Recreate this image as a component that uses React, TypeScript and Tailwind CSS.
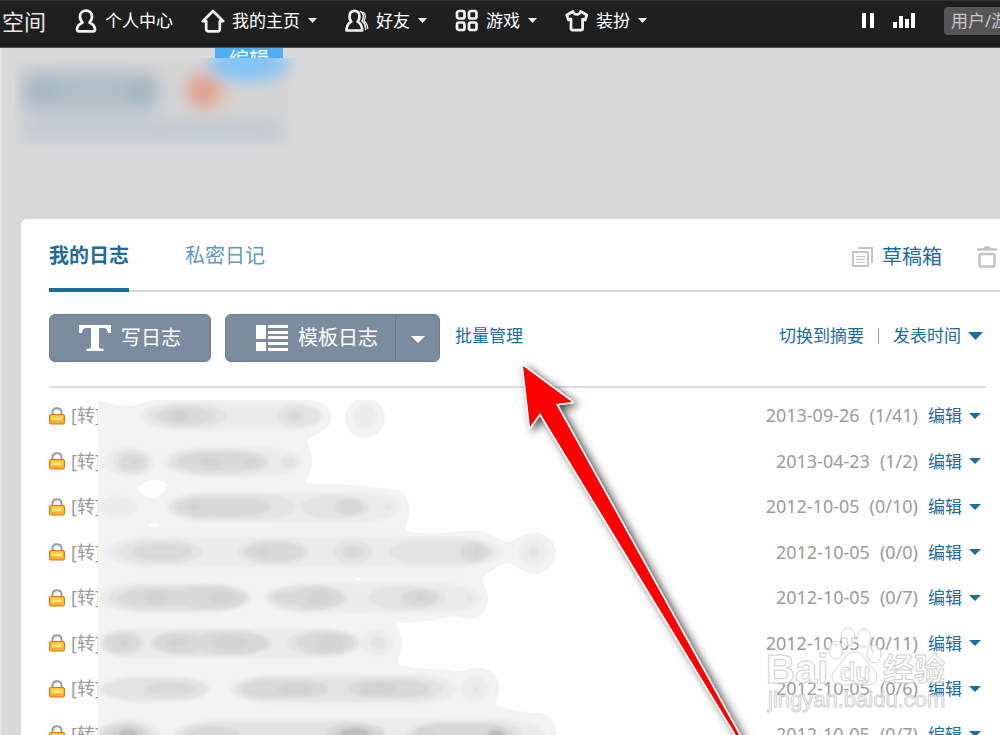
import { ReactNode } from "react";

type Post = { date: string; counts: string };

const posts: Post[] = [
  { date: "2013-09-26", counts: "(1/41)" },
  { date: "2013-04-23", counts: "(1/2)" },
  { date: "2012-10-05", counts: "(0/10)" },
  { date: "2012-10-05", counts: "(0/0)" },
  { date: "2012-10-05", counts: "(0/7)" },
  { date: "2012-10-05", counts: "(0/11)" },
  { date: "2012-10-05", counts: "(0/6)" },
  { date: "2012-10-05", counts: "(0/7)" }
];

// start x, end x, half height, shade index
type Smudge = [number, number, number, number];

const shades = ["#ececec", "#e3e3e3", "#d9d9d9", "#d3d3d3", "#bdbdbd"];

const smudges: { y: number; marks: Smudge[] }[] = [
  {
    y: 416,
    marks: [
      [140, 325, 14, 0], [353, 377, 12, 0], [148, 227, 12, 1], [276, 320, 11, 1],
      [157, 213, 9, 2], [286, 304, 5, 2], [167, 188, 5, 3]
    ]
  },
  {
    y: 462,
    marks: [
      [103, 155, 15, 0], [162, 303, 15, 0], [113, 150, 12, 1], [169, 270, 13, 1], [280, 297, 6, 1],
      [119, 146, 8, 2], [177, 265, 9, 2], [131, 139, 3, 3], [200, 222, 5, 3], [243, 258, 5, 3]
    ]
  },
  {
    y: 507,
    marks: [
      [98, 138, 11, 0], [165, 402, 15, 0], [169, 296, 13, 1], [300, 370, 12, 1],
      [175, 270, 9, 2], [334, 363, 8, 2], [187, 201, 4, 3], [384, 392, 3, 1]
    ]
  },
  {
    y: 552,
    marks: [
      [104, 502, 15, 0], [518, 548, 14, 0], [119, 202, 12, 1], [238, 310, 13, 1], [332, 373, 11, 1],
      [388, 494, 12, 1], [528, 539, 5, 1], [133, 192, 8, 2], [244, 304, 10, 2], [342, 363, 6, 2],
      [460, 488, 10, 2], [255, 272, 5, 3], [472, 482, 5, 3]
    ]
  },
  {
    y: 598,
    marks: [
      [98, 252, 15, 0], [264, 482, 15, 0], [108, 249, 13, 1], [268, 348, 13, 1], [368, 446, 12, 1],
      [118, 190, 9, 2], [172, 245, 11, 2], [274, 300, 6, 2], [290, 343, 11, 2], [402, 438, 9, 2],
      [146, 168, 6, 3], [208, 236, 6, 3], [307, 333, 7, 3], [415, 426, 3, 3], [466, 472, 3, 1]
    ]
  },
  {
    y: 643,
    marks: [
      [98, 362, 15, 0], [360, 394, 13, 0], [101, 145, 13, 1], [150, 272, 13, 1], [286, 360, 13, 1],
      [370, 386, 6, 1], [104, 140, 9, 2], [153, 205, 10, 2], [192, 268, 11, 2], [296, 354, 11, 2],
      [120, 128, 4, 3], [166, 188, 5, 3], [212, 248, 7, 3], [316, 344, 8, 3]
    ]
  },
  {
    y: 689,
    marks: [
      [98, 210, 13, 0], [230, 458, 15, 0], [461, 489, 13, 0], [104, 207, 11, 1], [235, 444, 12, 1],
      [146, 196, 6, 2], [242, 328, 9, 2], [348, 430, 9, 2], [278, 312, 6, 3], [360, 398, 6, 3], [474, 479, 2, 1]
    ]
  },
  {
    y: 735,
    marks: [
      [98, 160, 16, 0], [172, 545, 16, 0], [98, 154, 13, 1], [178, 388, 13, 1], [406, 524, 14, 1],
      [104, 148, 11, 2], [186, 240, 9, 2], [324, 384, 12, 2], [414, 514, 11, 2],
      [110, 144, 9, 3], [332, 378, 9, 3], [414, 436, 7, 3], [486, 508, 8, 3],
      [118, 138, 6, 4], [340, 370, 7, 4], [488, 504, 5, 4]
    ]
  }
];

export default function App() {
  return (
    <div className="flex h-screen flex-col overflow-hidden bg-[#d9d9d9] font-['Noto_Sans','Noto_Sans_CJK_SC',sans-serif] text-[17px]">
      <TopBar />
      <div className="flex flex-1 flex-col border-l-2 border-[#e2e2e2]">
        <Profile />
        <main className="relative ml-[19px] flex-1 rounded-tl-md bg-[#fefefe] pl-7">
          <Tabs />
          <Toolbar />
          <ul className="mt-[5px] mr-[13px] grid h-[364px] grid-rows-8">
            {posts.map((post, index) => (
              <PostRow key={index} post={post} />
            ))}
          </ul>
          <Redaction />
          <Watermark />
          <Pointer />
        </main>
      </div>
    </div>
  );
}

function TopBar() {
  return (
    <header className="flex h-12 shrink-0 items-center overflow-hidden border-t border-b border-t-[#333] border-b-[#555] bg-[#1f1f1f] pb-[7px] pl-0.5 text-white">
      <a href="#" className="shrink-0 text-[22px] leading-6 text-[#e6e6e6]">空间</a>
      <nav className="ml-[28px] flex items-center gap-7">
        <NavItem label="个人中心">
          <path d="M8.5 13.5C6.6 11.8 6 9.8 6 7.6 6 4.200 8.600 1.600 12 1.600s6 2.600 6 6c0 2.200-.6 4.200-2.500 5.900 3.500 1.700 5.500 4 5.500 7 0 1.200-.7 1.900-2 1.900H5c-1.300 0-2-.7-2-1.900 0-3 2-5.300 5.500-7z" />
        </NavItem>
        <NavItem label="我的主页" caret>
          <path d="M12 2 1.800 12.200h3.400V20c0 1.600.8 2.300 2.300 2.300h9c1.500 0 2.300-.7 2.300-2.300v-7.800h3.400z" />
        </NavItem>
        <NavItem label="好友" caret>
          <path d="M6.300 12.600C4.800 11 4.500 9.500 4.500 7.400c0-3.500 2.100-5.600 5-5.600s5 2.100 5 5.600c0 2.100-.4 3.600-1.900 5.200 3 1.500 4.600 4.400 4.600 8.900H1.500c0-4.500 1.800-7.400 4.800-8.900z" />
          <path d="M15.500 2.500c2.800.8 4 5.600 1.500 9.500 2.500 1.500 3.600 4.500 3.600 8.500" strokeWidth="1.500" />
          <path d="M18.500 3.500c2 1.800 2 5.500.5 8.500 2.200 1.500 3.500 4 3.700 7.500" strokeWidth="1.300" />
        </NavItem>
        <NavItem label="游戏" caret>
          <rect x="2" y="2" width="7.500" height="7.500" rx="2" />
          <rect x="14" y="2" width="7.500" height="7.500" rx="2" />
          <rect x="2" y="13.500" width="7.500" height="7.500" rx="2" />
          <rect x="14" y="13.500" width="7.500" height="7.500" rx="2" />
        </NavItem>
        <NavItem label="装扮" caret>
          <path d="M8 2.500 1.800 6l1.700 5 2.500-1v9.500c0 1.200.7 1.700 1.800 1.700h8c1.100 0 1.800-.5 1.800-1.700V10l2.500 1L21.800 6l-6.200-3.500C15 4.800 13.800 5.500 11.800 5.500S8.600 4.800 8 2.500z" />
        </NavItem>
      </nav>
      <div className="-mr-16 ml-auto flex shrink-0 items-center">
        <button type="button" aria-label="暂停" className="mr-[19px]">
          <svg width="12" height="15" fill="#fff">
            <rect width="4" height="15" />
            <rect x="8" width="4" height="15" />
          </svg>
        </button>
        <button type="button" aria-label="音乐" className="mr-[27px]">
          <svg width="24" height="15" fill="#fff">
            <rect x="0" y="9" width="4" height="6" />
            <rect x="6" y="3" width="4" height="12" />
            <rect x="12" y="6" width="4" height="9" />
            <rect x="18" y="0" width="4" height="15" />
          </svg>
        </button>
        <input
          type="search"
          aria-label="搜索"
          placeholder="用户/游戏"
          className="h-7 w-[120px] rounded-sm bg-[#555] pl-[7px] text-[17px] text-white outline-none placeholder:text-[#c8c8c8]"
        />
      </div>
    </header>
  );
}

function NavItem({ label, caret = false, children }: { label: string; caret?: boolean; children: ReactNode }) {
  return (
    <a href="#" className="flex shrink-0 items-center leading-6">
      <svg width="24" height="24" viewBox="0 0 24 24" fill="none" stroke="#f2f2f2" strokeWidth="2.700" strokeLinejoin="round" strokeLinecap="round">
        {children}
      </svg>
      <span className="ml-[7px]">{label}</span>
      {caret ? <Caret className="ml-2 h-[5px] w-[9px] text-[#eee]" /> : null}
    </a>
  );
}

function Caret({ className }: { className: string }) {
  return (
    <svg className={className} viewBox="0 0 12 6" preserveAspectRatio="none" fill="currentColor" aria-hidden="true">
      <path d="M0 0h12L6 6z" />
    </svg>
  );
}

function Profile() {
  return (
    <section className="relative h-[171px] shrink-0">
      <a href="#" className="ml-[213px] block h-[10px] w-[68px] overflow-hidden bg-[#50aff2] pt-0.5 text-center text-[20px] leading-5 text-white">
        编辑
      </a>
      <svg className="absolute top-[10px] left-[13px]" width="290" height="92" viewBox="15 58 290 92" aria-hidden="true">
        <defs>
          <filter id="soft" x="-50%" y="-80%" width="200%" height="260%">
            <feGaussianBlur stdDeviation="8" />
          </filter>
          <filter id="edge">
            <feGaussianBlur stdDeviation="2" />
          </filter>
        </defs>
        <rect x="18" y="60" width="272" height="86" fill="#d5d5d5" filter="url(#edge)" />
        <g filter="url(#soft)">
          <rect x="22" y="72" width="138" height="40" rx="14" fill="#b0bfc8" />
          <ellipse cx="43" cy="90" rx="18" ry="12" fill="#a5b7c1" />
          <ellipse cx="140" cy="91" rx="14" ry="11" fill="#a2b5c0" />
          <rect x="24" y="120" width="258" height="20" rx="10" fill="#c1c9d1" />
          <rect x="26" y="108" width="125" height="24" fill="#c4cbd1" />
          <circle cx="204" cy="91" r="17" fill="#e0a08c" />
          <circle cx="225" cy="99" r="8" fill="#dccbb9" />
          <ellipse cx="248" cy="64" rx="40" ry="18" fill="#83c4f5" />
        </g>
      </svg>
    </section>
  );
}

function Tabs() {
  return (
    <div className="flex items-center justify-between border-b-2 border-[#d6d6d6]">
      <div role="tablist" className="-mb-0.5 flex gap-14 text-[20px]">
        <button type="button" role="tab" aria-selected="true" className="h-[73px] border-b-4 border-[#1f6b99] pt-1 font-bold text-[#1f6b99]">
          我的日志
        </button>
        <button type="button" role="tab" aria-selected="false" className="h-[73px] border-b-4 border-transparent pt-1 text-[#6299bb]">
          私密日记
        </button>
      </div>
      <div className="mr-[3px] flex items-center pt-1">
        <a href="#" className="flex items-center gap-[9px] text-[20px] leading-7 text-[#1f6b99]">
          <svg width="21" height="20" viewBox="0 0 21 20" fill="none" stroke="#c4c4c4" strokeWidth="2" aria-hidden="true">
            <path d="M6 1h14v15" />
            <rect x="1" y="5" width="15" height="14" />
            <path d="M4 9.500h9M4 12.500h9M4 15.500h9" strokeWidth="1" />
          </svg>
          草稿箱
        </a>
        <button type="button" aria-label="回收站" className="ml-[35px]">
          <svg width="20" height="23" viewBox="0 0 20 23" fill="none" stroke="#c4c4c4" strokeWidth="2.500" aria-hidden="true">
            <path d="M0 4.500h20" />
            <path d="M6 4c1-4 7-4 8 0z" fill="#c4c4c4" stroke="none" />
            <rect x="2.500" y="9" width="15" height="12.500" rx="1" />
          </svg>
        </button>
      </div>
    </div>
  );
}

function Toolbar() {
  return (
    <div className="mr-[13px] flex items-center border-b-2 border-[#e0e0e0] pt-[22px] pb-6 text-[#1f6b99]">
      <button type="button" className="flex h-12 w-[162px] items-center rounded-md border border-[#6b7c8d] bg-[#7b8c9e] pl-[29px] text-[20px] text-white">
        <svg width="32" height="26" viewBox="0 0 32 26" fill="#fff" aria-hidden="true">
          <path d="M0 0h32v8h-3c-.3-3-1.500-5-4-5h-5v19c0 1.300.5 1.700 2 1.700h2.500V26h-17v-2.300H10c1.500 0 2-.4 2-1.700V3H7C4.500 3 3.300 5 3 8H0z" />
        </svg>
        <span className="ml-[10px]">写日志</span>
      </button>
      <div className="ml-[14px] flex h-12 w-[215px] rounded-md border border-[#6b7c8d] bg-[#7b8c9e] text-white">
        <button type="button" className="flex flex-1 items-center border-r border-[#6b7c8d] pl-[30px] text-[20px]">
          <svg width="32" height="26" viewBox="0 0 32 26" fill="#fff" aria-hidden="true">
            <rect width="10" height="14" />
            <rect y="17" width="10" height="9" />
            <path d="M12 0h20v3H12zM12 6h20v3H12zM12 11h20v3H12zM12 17h20v3H12zM12 23h20v3H12z" />
          </svg>
          <span className="ml-[10px]">模板日志</span>
        </button>
        <button type="button" aria-label="更多模板" className="flex w-[43px] items-center justify-center pt-0.5">
          <Caret className="h-[7px] w-[14px]" />
        </button>
      </div>
      <button type="button" className="ml-[15px] pb-1">批量管理</button>
      <div className="ml-auto flex items-center pb-1">
        <button type="button">切换到摘要</button>
        <span className="mx-[14px] h-4 w-px bg-[#999]" />
        <button type="button" className="mr-1 flex items-center gap-[7px]">
          发表时间
          <Caret className="h-2 w-[15px]" />
        </button>
      </div>
    </div>
  );
}

function PostRow({ post }: { post: Post }) {
  return (
    <li className="flex items-center pr-[6px] text-[18px] text-[#9b9b9b]">
      <svg width="16" height="18" viewBox="0 0 16 18" className="shrink-0" aria-hidden="true">
        <path d="M3.500 9V5.500C3.500 2.800 5.300 1.300 8 1.300s4.500 1.500 4.500 4.200V9" fill="none" stroke="#9a9a9f" strokeWidth="2" />
        <path d="M5 8V5.800C5 4 6.300 3 8 3" fill="none" stroke="#d8d8dc" strokeWidth="1" />
        <rect x=".5" y="7.500" width="15" height="9.500" rx="1.500" fill="#f9b02d" stroke="#d8760f" />
        <rect x="2" y="8.500" width="12" height="5" fill="#ffd04a" />
        <path d="M4 12h8" stroke="#fff0a0" strokeWidth="1.500" />
      </svg>
      <a href="#" className="ml-1.5">[转]</a>
      <span className="ml-auto">{post.date}</span>
      <span className="ml-[10px]">{post.counts}</span>
      <button type="button" className="ml-[10px] flex items-center gap-[7px] text-[17px] text-[#1f6b99]">
        编辑
        <Caret className="h-[6px] w-3" />
      </button>
    </li>
  );
}

// Covers the post titles; coordinates are window pixels, the card starts at 21,219.
function Redaction() {
  return (
    <svg className="pointer-events-none absolute top-[181px] left-[77px]" width="462" height="335" viewBox="98 400 462 335" aria-hidden="true">
      <defs>
        <filter id="smudge" filterUnits="userSpaceOnUse" x="98" y="400" width="462" height="340">
          <feGaussianBlur stdDeviation="1.500" />
        </filter>
      </defs>
      <path
        fill="#f3f3f3"
        d="M98 401c12 1 20 5 32 5 8 0 12-5 24-6h154c14 0 24 8 23 18 0 12-16 16-23 22-2 3 4 10 4 22s-8 18-4 21c12 3 38 0 55 3 12 2 22 2 32 3 11 3 15 14 14 22 0 10-6 17-3 20 12 3 26 2 34 2 12 0 24-4 38-2 14 1 24 12 32 11 8-3 12-9 24-9 14 0 22 10 22 20s-8 21-22 21c-12 0-18-10-26-11-8 1-20 9-25 16-1 3 5 9 5 20s-8 20-18 20c-8 0-14-4-22-2-16 5-38 5-50 6-4 2 4 8 4 20s-6 17-3 21c10 6 46 4 57 7 10 0 14-3 22-3 14 0 21 10 21 20 0 8-5 14-2 17 10 4 30 8 42 8 10 1 16 8 18 22H98z"
      />
      <circle cx="365" cy="418" r="20" fill="#f3f3f3" />
      <path d="M137 490c3-5 8-9 16-10 6 0 13 1 14 5-1 5-8 12-14 14-6-1-10-6-16-9z" fill="#fefefe" />
      <ellipse cx="154" cy="525" rx="5" ry="2" fill="#fefefe" />
      <ellipse cx="358" cy="579" rx="3" ry="1" fill="#fefefe" />
      {shades.map((shade, level) => (
        <g key={shade} fill={shade} filter="url(#smudge)">
          {smudges.map(({ y, marks }) =>
            marks
              .filter((mark) => mark[3] === level)
              .map(([start, end, half]) => (
                <rect key={`${y}-${start}`} x={start} y={y - half} width={end - start} height={half * 2} rx={Math.min((end - start) / 2, half * 3)} ry={half} />
              ))
          )}
        </g>
      ))}
    </svg>
  );
}

function Watermark() {
  return (
    <svg
      className="pointer-events-none absolute top-[405px] left-[741px]"
      width="190"
      height="90"
      viewBox="762 624 190 90"
      fill="#fff"
      fillOpacity="0.65"
      stroke="#d2d2d2"
      strokeWidth="1"
      fontFamily="'Liberation Sans', 'Noto Sans CJK SC', sans-serif"
    >
      <text x="766" y="683" fontSize="40" fontWeight="700">Bai</text>
      <ellipse cx="836" cy="650" rx="7" ry="9" />
      <ellipse cx="848" cy="637" rx="7" ry="9" />
      <ellipse cx="864" cy="638" rx="7" ry="9" />
      <ellipse cx="874" cy="654" rx="7" ry="9" />
      <path d="M855 652c-7 0-10 6-14 11-5 5-9 9-9 14 0 6 5 8 10 8 5 0 8-1 13-1s8 1 13 1c5 0 9-3 9-8s-4-9-9-14c-4-5-6-11-13-11z" />
      <text x="840" y="681" fontSize="25" fontWeight="700">du</text>
      <text x="883" y="680" fontSize="31" fontWeight="700">经验</text>
      <text x="768" y="707" fontSize="22">jingyan.baidu.com</text>
    </svg>
  );
}

function Pointer() {
  return (
    <svg className="pointer-events-none absolute top-[131px] left-[479px]" width="270" height="385" viewBox="500 350 270 385" aria-hidden="true">
      <defs>
        <filter id="arrow-shadow" x="-20%" y="-10%" width="140%" height="120%">
          <feDropShadow dx="4" dy="3" stdDeviation="4" floodColor="#000" floodOpacity="0.7" />
        </filter>
      </defs>
      <path
        d="M523 366 572 402 556 404 742 740 739 740 540 413 530 427z"
        fill="#f00"
        stroke="#fff"
        strokeWidth="3"
        strokeLinejoin="round"
        paintOrder="stroke"
        filter="url(#arrow-shadow)"
      />
    </svg>
  );
}
